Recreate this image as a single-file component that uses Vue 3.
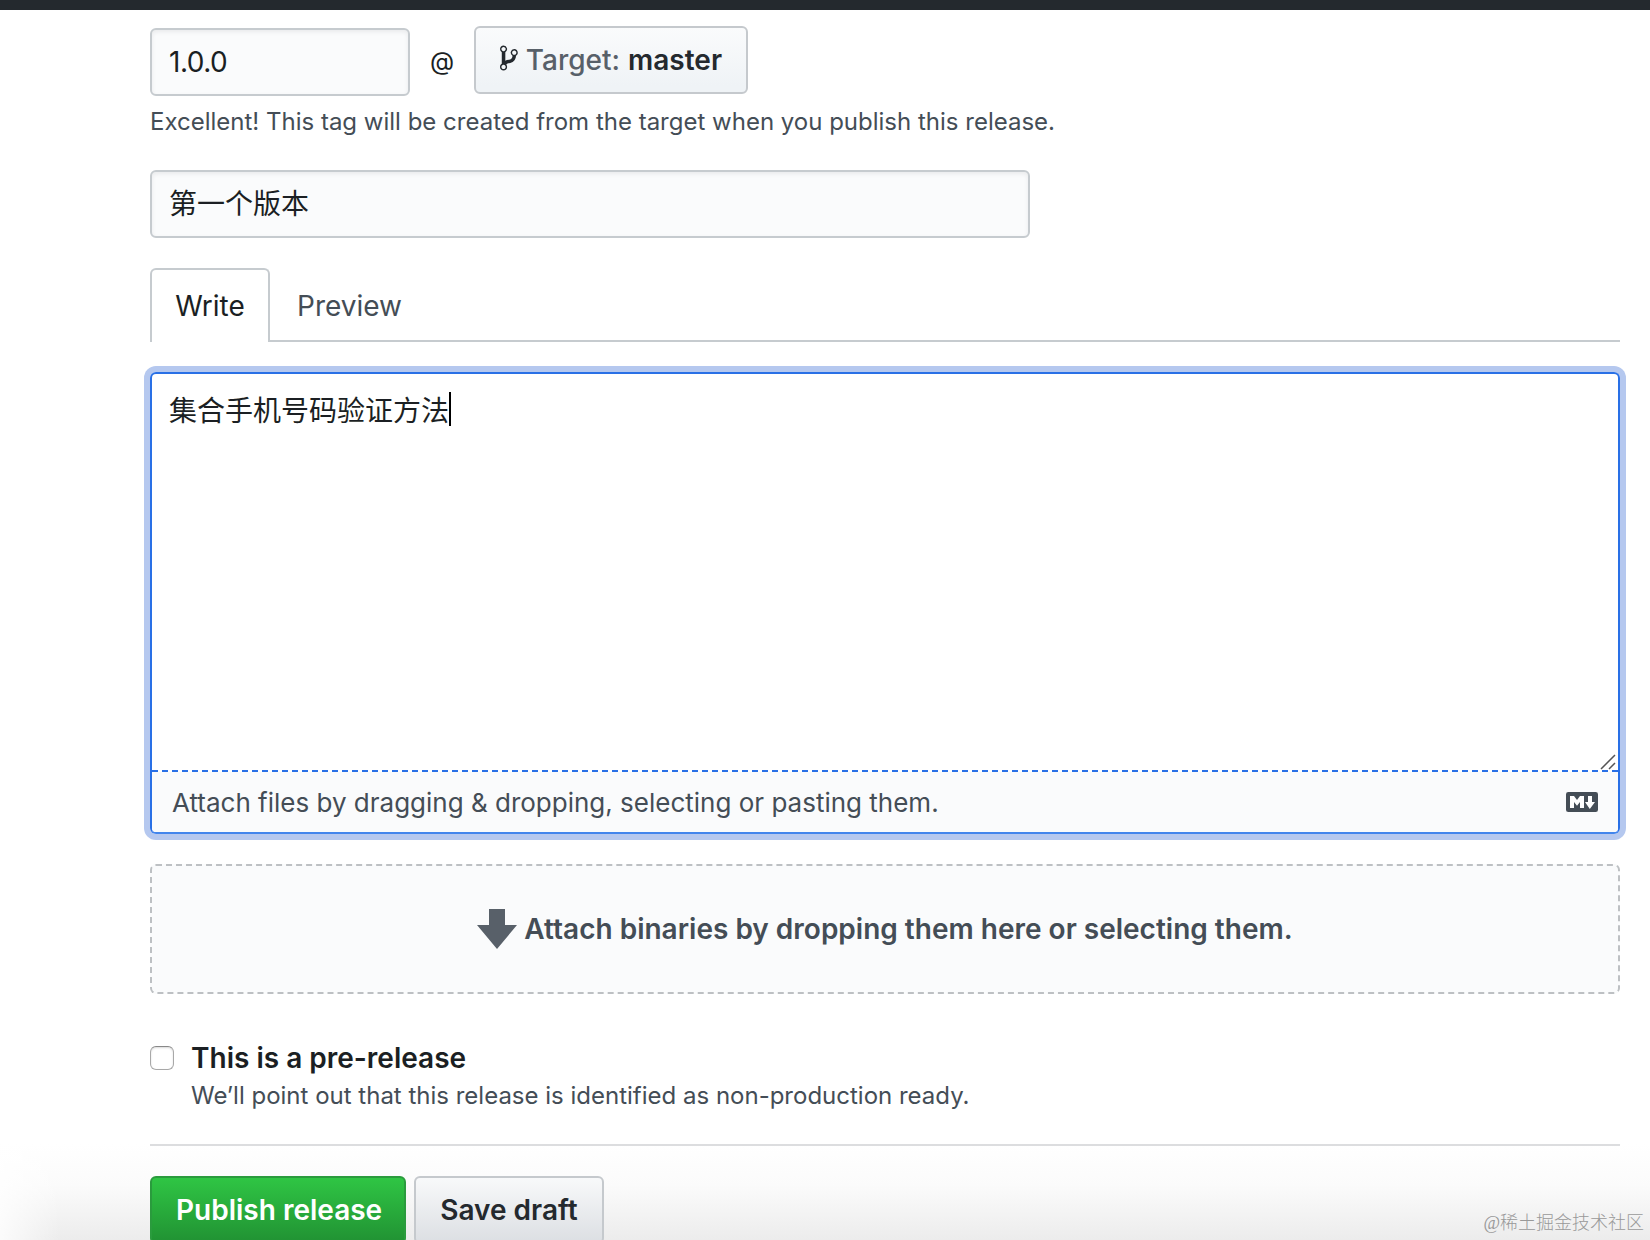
<template>
  <div class="page">
    <div class="topbar"></div>
    <form class="release-form" @submit.prevent>
      <div class="tag-row">
        <div class="field tag-field">{{ tagName }}</div>
        <span class="at">@</span>
        <button type="button" class="btn target-btn">
          <svg class="branch-icon" viewBox="0 0 10 16" width="20" height="32">
            <path fill-rule="evenodd" fill="currentColor" d="M10 5c0-1.11-.89-2-2-2a1.993 1.993 0 0 0-1 3.72v.3c-.02.52-.23.98-.63 1.38-.4.4-.86.61-1.38.63-.83.02-1.48.16-2 .45V4.72a1.993 1.993 0 0 0-1-3.72C.88 1 0 1.89 0 3a2 2 0 0 0 1 1.72v6.56c-.59.35-1 .99-1 1.72 0 1.11.89 2 2 2 1.11 0 2-.89 2-2 0-.53-.2-1-.53-1.36.09-.06.48-.41.59-.47.25-.11.56-.17.94-.17 1.05-.05 1.95-.45 2.75-1.25S8.95 7.77 9 6.73h-.02C9.59 6.37 10 5.73 10 5zM2 1.8c.66 0 1.2.55 1.2 1.2 0 .65-.55 1.2-1.2 1.2C1.35 4.2.8 3.65.8 3c0-.65.55-1.2 1.2-1.2zm0 12.41c-.66 0-1.2-.55-1.2-1.2 0-.65.55-1.2 1.2-1.2.65 0 1.2.55 1.2 1.2 0 .65-.55 1.2-1.2 1.2zm6-8c-.66 0-1.2-.55-1.2-1.2 0-.65.55-1.2 1.2-1.2.65 0 1.2.55 1.2 1.2 0 .65-.55 1.2-1.2 1.2z" />
          </svg>
          <span class="target-label">Target:</span>
          <span class="target-name">master</span>
        </button>
      </div>
      <p class="hint tag-hint">Excellent! This tag will be created from the target when you publish this release.</p>

      <div class="field title-field">{{ title }}</div>

      <nav class="tabs">
        <button
          v-for="tab in tabs"
          :key="tab"
          type="button"
          class="tab"
          :class="{ selected: tab === activeTab }"
          @click="activeTab = tab"
        >{{ tab }}</button>
      </nav>

      <div class="editor">
        <div class="editor-body">
          <span>{{ notes }}</span><span class="caret"></span>
          <svg class="resizer" viewBox="0 0 16 16" width="16" height="16">
            <path d="M1 15 15 1M9 15l6-6" fill="none" stroke="#555" stroke-width="1.5" />
          </svg>
        </div>
        <div class="editor-footer">
          <span class="attach-text">Attach files by dragging &amp; dropping, selecting or pasting them.</span>
          <svg class="md-icon" viewBox="0 0 16 10" width="32" height="20">
            <rect width="16" height="10" rx="1.15" fill="#444d56" />
            <path fill="#fff" d="M2 8V2h2l1.5 2L7 2h2v6H7V5L5.500 6.900 4 5v3zM11.900 8.500 9.500 5H11V2h2v3h1.500z" />
          </svg>
        </div>
      </div>

      <div class="dropzone">
        <svg viewBox="0 0 40 40" width="40" height="40">
          <path fill="#586069" d="M12 0h16v16h12L20 40 0 16h12z" />
        </svg>
        <span class="drop-text">Attach binaries by dropping them here or selecting them.</span>
      </div>

      <div class="prerelease">
        <span class="checkbox"></span>
        <div>
          <div class="pre-title">This is a pre-release</div>
          <p class="hint pre-hint">We’ll point out that this release is identified as non-production ready.</p>
        </div>
      </div>

      <div class="actions">
        <button type="submit" class="btn btn-primary">Publish release</button>
        <button type="button" class="btn save-btn">Save draft</button>
      </div>
    </form>
    <div class="watermark">@稀土掘金技术社区</div>
  </div>
</template>

<script setup>
import { ref } from 'vue'

const tagName = ref('1.0.0')
const title = ref('第一个版本')
const notes = ref('集合手机号码验证方法')
const tabs = ['Write', 'Preview']
const activeTab = ref('Write')
</script>

<style>
body {
  margin: 0;
  overflow: hidden;
}
</style>

<style scoped>
.page {
  position: relative;
  box-sizing: border-box;
  width: 1650px;
  height: 1240px;
  overflow: hidden;
  font-family: Inter, "Noto Sans CJK SC", sans-serif;
  font-size: 28px;
  color: #1b1f23;
  background: linear-gradient(90deg, rgba(255, 255, 255, 0.8), rgba(255, 255, 255, 0) 60px),
    linear-gradient(180deg, #fff 1144px, #fbfbfb 1185px, #ececec 1240px);
}
.page * {
  box-sizing: border-box;
}
.topbar {
  height: 10px;
  background: #24292e;
}
.release-form {
  display: flex;
  flex-direction: column;
  width: 1470px;
  margin-left: 150px;
  padding-top: 16px;
}
.tag-row {
  display: flex;
  height: 70px;
}
.field {
  height: 68px;
  padding: 0 17px;
  line-height: 64px;
  border: 2px solid #c6cbcf;
  border-radius: 6px;
  background: #fafbfc;
  box-shadow: inset 0 2px 4px rgba(27, 31, 35, 0.075);
}
.tag-field {
  width: 260px;
  margin-top: 2px;
  letter-spacing: -0.5px;
}
.at {
  width: 64px;
  text-align: center;
  font-size: 25px;
  line-height: 70px;
}
.btn {
  height: 68px;
  padding: 0 24px;
  font-family: inherit;
  font-size: 28px;
  font-weight: 600;
  line-height: 64px;
  color: #24292e;
  border: 2px solid #c5c9cd;
  border-radius: 6px;
  background: linear-gradient(180deg, #fafbfc, #eff3f6 90%);
  white-space: nowrap;
}
.target-btn {
  display: flex;
  width: 274px;
}
.branch-icon {
  margin: 14px 8px 0 0;
}
.target-label {
  font-weight: 500;
  color: #586069;
  margin-right: 8px;
}
.hint {
  margin: 0;
  font-size: 24px;
  line-height: 36px;
  color: #444d56;
  white-space: nowrap;
}
.tag-hint {
  margin-top: 8px;
  height: 36px;
}
.title-field {
  width: 880px;
  margin-top: 30px;
}
.tabs {
  display: flex;
  height: 74px;
  margin-top: 30px;
  border-bottom: 2px solid #c6cbcf;
}
.tab {
  height: 74px;
  padding: 0 25px;
  font: inherit;
  line-height: 72px;
  color: #444d56;
  border: 2px solid transparent;
  border-bottom: 0;
  background: none;
}
.tab.selected {
  width: 120px;
  padding: 0;
  color: #1b1f23;
  border-color: #c6cbcf;
  border-radius: 6px 6px 0 0;
  background: #fff;
}
.editor {
  height: 462px;
  margin-top: 30px;
  border: 2px solid #2970e6;
  border-bottom-color: #4285ec;
  border-radius: 6px;
  box-shadow: 0 0 0 6px #b5c8ef;
}
.editor-body {
  position: relative;
  display: flex;
  height: 398px;
  padding: 17px 17px 0;
  line-height: 40px;
  border-bottom: 2px dashed #2970e6;
}
.caret {
  width: 2px;
  height: 34px;
  margin-top: 1px;
  background: #000;
}
.resizer {
  position: absolute;
  right: 2px;
  bottom: 0;
}
.editor-footer {
  display: flex;
  align-items: center;
  justify-content: space-between;
  height: 60px;
  padding: 0 20px;
  border-radius: 0 0 4px 4px;
  background: #fafbfc;
}
.attach-text {
  font-size: 26px;
  color: #444d56;
}
.dropzone {
  display: flex;
  align-items: center;
  justify-content: center;
  gap: 7px;
  height: 130px;
  margin-top: 30px;
  border: 2px dashed #bdc0c3;
  border-radius: 6px;
  background: #fafbfc;
}
.drop-text {
  font-weight: 600;
  color: #444d56;
}
.prerelease {
  display: flex;
  gap: 17px;
  height: 152px;
  padding-top: 44px;
  border-bottom: 2px solid #dcdddf;
}
.checkbox {
  width: 24px;
  height: 24px;
  margin-top: 8px;
  border: 1px solid #a8a8a8;
  border-top-color: #888;
  border-radius: 6px;
  background: #fff;
  box-shadow: inset 0 1px 2px rgba(0, 0, 0, 0.15);
}
.pre-title {
  font-weight: 600;
  line-height: 40px;
}
.actions {
  display: flex;
  gap: 8px;
  margin-top: 30px;
}
.btn-primary {
  width: 256px;
  color: #fff;
  border-color: #2a9b3d;
  background: linear-gradient(180deg, #2fc544, #219233);
}
.save-btn {
  width: 190px;
  background: linear-gradient(180deg, #f8f9fa, #dcdfe3);
}
.watermark {
  position: absolute;
  right: 6px;
  bottom: 5px;
  font-family: "Liberation Serif", "Noto Sans CJK SC", serif;
  font-size: 18px;
  line-height: 24px;
  font-weight: 300;
  color: #999;
}
</style>
